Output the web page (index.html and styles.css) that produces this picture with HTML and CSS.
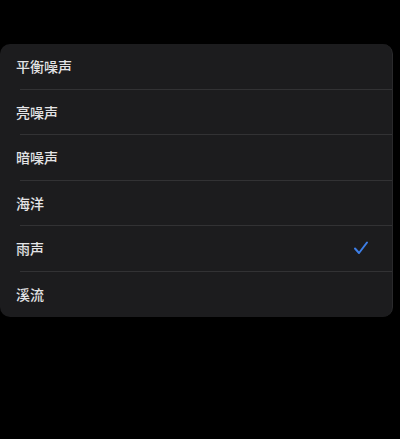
FILE: index.html
```html
<!DOCTYPE html>
<html lang="zh">
<head>
<meta charset="utf-8">
<link rel="stylesheet" href="styles.css">
</head>
<body>
<div class="card">
  <div class="row"><span class="label">平衡噪声</span></div>
  <div class="row"><span class="label">亮噪声</span></div>
  <div class="row"><span class="label">暗噪声</span></div>
  <div class="row"><span class="label">海洋</span></div>
  <div class="row"><span class="label">雨声</span>
    <svg class="check" width="16" height="14" viewBox="0 0 16 14"><path d="M2 7.5 L6 12 L14 1.5" fill="none" stroke="#3d7ee6" stroke-width="2" stroke-linecap="round" stroke-linejoin="round"/></svg>
  </div>
  <div class="row last"><span class="label">溪流</span></div>
</div>
</body>
</html>
```
FILE: styles.css
```css
html, body {
  margin: 0;
  padding: 0;
  background: #000;
  height: 100%;
}
body {
  font-family: "Noto Sans CJK SC", "Noto Sans", sans-serif;
  padding-top: 44px;
  box-sizing: border-box;
}
.card {
  width: 393px;
  background: #1c1c1e;
  border-radius: 10px;
  border-right: 1px solid #2a2a2c;
  box-sizing: border-box;
  overflow: hidden;
}
.row {
  margin-left: 20px;
  height: 45.5px;
  box-sizing: border-box;
  border-bottom: 1px solid #323234;
  display: flex;
  align-items: center;
  justify-content: space-between;
  padding-right: 23px;
}
.row.last {
  border-bottom: none;
}
.label {
  margin-left: -4px;
  color: #e4e4e6;
  font-size: 14px;
  font-weight: 500;
  letter-spacing: 0;
}
.check {
  display: block;
}
```
